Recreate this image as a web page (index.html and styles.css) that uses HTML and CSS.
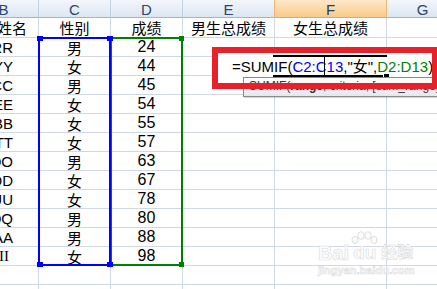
FILE: index.html
```html
<!DOCTYPE html>
<html>
<head>
<meta charset="utf-8">
<link rel="stylesheet" href="styles.css">
</head>
<body>
<div class="sheet">
  <div class="grid">
    <div class="hd">B</div><div class="hd">C</div><div class="hd">D</div><div class="hd hd-before-sel">E</div><div class="hd hd-sel">F</div><div class="hd">G</div>

    <div class="c name-h">姓名</div><div class="c cjk">性别</div><div class="c cjk">成绩</div><div class="c cjk">男生总成绩</div><div class="c cjk">女生总成绩</div><div class="c"></div>

    <div class="c name">RR</div><div class="c cjk">男</div><div class="c">24</div><div class="c"></div><div class="c"></div><div class="c"></div>
    <div class="c name">YY</div><div class="c cjk">女</div><div class="c">44</div><div class="c"></div><div class="c"></div><div class="c"></div>
    <div class="c name">CC</div><div class="c cjk">男</div><div class="c">45</div><div class="c"></div><div class="c"></div><div class="c"></div>
    <div class="c name">EE</div><div class="c cjk">女</div><div class="c">54</div><div class="c"></div><div class="c"></div><div class="c"></div>
    <div class="c name">BB</div><div class="c cjk">女</div><div class="c">55</div><div class="c"></div><div class="c"></div><div class="c"></div>
    <div class="c name">TT</div><div class="c cjk">女</div><div class="c">57</div><div class="c"></div><div class="c"></div><div class="c"></div>
    <div class="c name">OO</div><div class="c cjk">男</div><div class="c">63</div><div class="c"></div><div class="c"></div><div class="c"></div>
    <div class="c name">OD</div><div class="c cjk">女</div><div class="c">67</div><div class="c"></div><div class="c"></div><div class="c"></div>
    <div class="c name">UU</div><div class="c cjk">女</div><div class="c">78</div><div class="c"></div><div class="c"></div><div class="c"></div>
    <div class="c name">QQ</div><div class="c cjk">男</div><div class="c">80</div><div class="c"></div><div class="c"></div><div class="c"></div>
    <div class="c name">AA</div><div class="c cjk">男</div><div class="c">88</div><div class="c"></div><div class="c"></div><div class="c"></div>
    <div class="c name name-serif">II</div><div class="c cjk">女</div><div class="c">98</div><div class="c"></div><div class="c"></div><div class="c"></div>

    <div class="c"></div><div class="c"></div><div class="c"></div><div class="c"></div><div class="c"></div><div class="c"></div>
    <div class="c"></div><div class="c"></div><div class="c"></div><div class="c"></div><div class="c"></div><div class="c"></div>
  </div>

  <div class="range range-green"></div>
  <div class="range range-blue"></div>
  <div class="handle handle-blue h-c-tl"></div>
  <div class="handle handle-blue h-c-tr"></div>
  <div class="handle handle-blue h-c-bl"></div>
  <div class="handle handle-blue h-c-br"></div>
  <div class="handle handle-green h-d-tr"></div>
  <div class="handle handle-green h-d-br"></div>

  <div class="edit">
    <span class="f-black">=SUMIF(</span><span class="f-blue">C2:C13</span><span class="f-black">,"女",</span><span class="f-green">D2:D13</span><span class="f-black">)</span>
  </div>
  <div class="active-line active-top"></div>
  <div class="active-line active-bottom"></div>
  <div class="caret"></div>
  <div class="fill-handle"></div>

  <div class="tip">SUMIF(<b>range</b>, criteria, [sum_range])</div>
  <div class="redbox"></div>

  <div class="watermark">
    <div class="wm-logo">
      <span class="wm-bai">Bai</span>
      <span class="wm-du">
        <svg class="wm-paw" width="28" height="14" viewBox="0 0 28 14">
          <ellipse cx="5" cy="9" rx="3" ry="3.6" fill="#fcfcfc" stroke="#dedede" stroke-width="1"/>
          <ellipse cx="11" cy="4.5" rx="3.2" ry="3.8" fill="#fcfcfc" stroke="#dedede" stroke-width="1"/>
          <ellipse cx="18" cy="4.5" rx="3.2" ry="3.8" fill="#fcfcfc" stroke="#dedede" stroke-width="1"/>
          <ellipse cx="24" cy="9" rx="3" ry="3.6" fill="#fcfcfc" stroke="#dedede" stroke-width="1"/>
        </svg>
        du
      </span>
      <span class="wm-jy">经验</span>
    </div>
    <div class="wm-url">jingyan.baidu.com</div>
  </div>
</div>
</body>
</html>
```

FILE: styles.css
```css
html, body {
  margin: 0;
  padding: 0;
  background: #fff;
}

.sheet {
  position: relative;
  width: 437px;
  height: 289px;
  overflow: hidden;
  font-family: "Liberation Sans", "Noto Sans CJK SC", sans-serif;
  color: #000;
}

.grid {
  display: grid;
  grid-template-columns: 70px 72px 72px 92px 112px 72px;
  grid-template-rows: 18px 20px repeat(14, 19px);
  margin-left: -31px;
  width: 490px;
}

.hd {
  box-sizing: border-box;
  display: flex;
  align-items: center;
  justify-content: center;
  padding-top: 2px;
  background: linear-gradient(#f3f6fb, #dce6f2);
  border-right: 1px solid #c3d1e2;
  border-bottom: 1px solid #9eb6ce;
  color: #2a4670;
  font-size: 15px;
}

.hd-before-sel {
  border-right-color: #e9b878;
}

.hd-sel {
  background: linear-gradient(#fde8c8, #f8ca88);
  border-bottom-color: #f0a650;
  border-right-color: #e9b878;
  color: #22406a;
}

.c {
  box-sizing: border-box;
  display: flex;
  align-items: center;
  justify-content: center;
  border-right: 1px solid #d0d7e5;
  border-bottom: 1px solid #d0d7e5;
  font-size: 16px;
  white-space: nowrap;
}

.cjk {
  font-size: 15px;
}

.name {
  justify-content: flex-end;
  padding-right: 25px;
  font-size: 15px;
}

.name-serif {
  font-family: "Liberation Serif", serif;
  padding-right: 29px;
}

.name-h {
  justify-content: flex-start;
  padding-left: 28px;
  font-size: 15px;
}

/* reference ranges */
.range {
  position: absolute;
  top: 37px;
  width: 73px;
  height: 229px;
  box-sizing: border-box;
}

.range-blue {
  left: 38px;
  border: 2px solid #0000ff;
}

.range-green {
  left: 110px;
  border: 2px solid #008000;
}

.handle {
  position: absolute;
  width: 6px;
  height: 5px;
}

.handle-blue { background: #0000ff; }
.handle-green { background: #008000; width: 5px; }

.h-c-tl { left: 37px; top: 36px; }
.h-c-tr { left: 107px; top: 36px; }
.h-c-bl { left: 37px; top: 262px; }
.h-c-br { left: 107px; top: 262px; }
.h-d-tr { left: 179px; top: 36px; }
.h-d-br { left: 179px; top: 262px; }

/* in-cell editor */
.edit {
  position: absolute;
  left: 218px;
  top: 53px;
  width: 215px;
  height: 30px;
  box-sizing: border-box;
  padding: 4px 0 0 14px;
  background: #fff;
  font-size: 15px;
  line-height: 20px;
  white-space: nowrap;
}

.f-black { color: #000; }
.f-blue { color: #0000ff; }
.f-green { color: #008000; }

.active-line {
  position: absolute;
  left: 273px;
  width: 114px;
  height: 2px;
  background: #000;
}

.active-top { top: 55px; }
.active-bottom { top: 75px; }

.caret {
  position: absolute;
  left: 324px;
  top: 56px;
  width: 1px;
  height: 20px;
  background: #000;
}

.fill-handle {
  position: absolute;
  left: 384px;
  top: 74px;
  width: 5px;
  height: 5px;
  background: #000;
  box-shadow: 0 0 0 1px #fff;
}

/* function tooltip */
.tip {
  position: absolute;
  left: 243px;
  top: 77px;
  width: 230px;
  height: 20px;
  box-sizing: border-box;
  padding-left: 5px;
  border: 1px solid #8a8a8a;
  background: linear-gradient(#ffffff, #e6e7ee);
  box-shadow: 1px 1px 1px rgba(0, 0, 0, 0.15);
  font-size: 12px;
  line-height: 16px;
  color: #333;
  white-space: nowrap;
}

.redbox {
  position: absolute;
  left: 212px;
  top: 47px;
  width: 226px;
  height: 42px;
  box-sizing: border-box;
  border: 6px solid #e8202a;
}

/* watermark */
.watermark {
  position: absolute;
  left: 318px;
  top: 234px;
  display: flex;
  flex-direction: column;
  align-items: flex-start;
  color: #fcfcfc;
  -webkit-text-stroke: 0.6px #dcdcdc;
  font-family: "Liberation Sans", "Noto Sans CJK SC", sans-serif;
  font-weight: bold;
}

.wm-logo {
  display: flex;
  align-items: flex-end;
  height: 29px;
}

.wm-bai {
  font-size: 20px;
  line-height: 20px;
}

.wm-du {
  position: relative;
  font-size: 19px;
  line-height: 20px;
  padding: 0 3px;
  margin-left: 1px;
}

.wm-paw {
  position: absolute;
  left: 0;
  top: -12px;
}

.wm-jy {
  font-size: 16px;
  line-height: 20px;
  margin-left: 2px;
}

.wm-url {
  font-size: 11px;
  line-height: 12px;
  margin-top: 1px;
}
```
